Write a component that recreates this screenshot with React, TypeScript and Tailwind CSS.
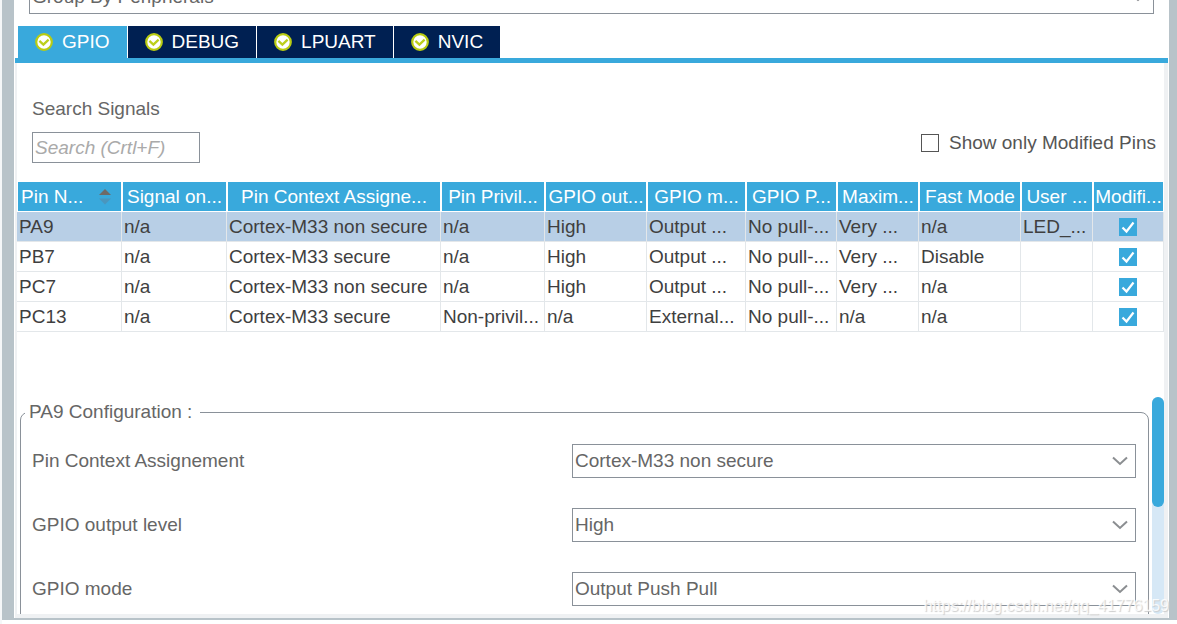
import { useState } from 'react';

interface Pin {
  name: string;
  values: string[];
}

const tabs = ['GPIO', 'DEBUG', 'LPUART', 'NVIC'];

const columns = [
  { label: 'Pin N...', width: 'w-[105px]' },
  { label: 'Signal on...', width: 'w-[105px]' },
  { label: 'Pin Context Assigne...', width: 'w-[214px]' },
  { label: 'Pin Privil...', width: 'w-[104px]' },
  { label: 'GPIO out...', width: 'w-[102px]' },
  { label: 'GPIO m...', width: 'w-[99px]' },
  { label: 'GPIO P...', width: 'w-[91px]' },
  { label: 'Maxim...', width: 'w-[82px]' },
  { label: 'Fast Mode', width: 'w-[102px]' },
  { label: 'User ...', width: 'w-[72px]' },
  { label: 'Modifi...', width: 'w-[71px]' },
];

const pins: Pin[] = [
  { name: 'PA9', values: ['n/a', 'Cortex-M33 non secure', 'n/a', 'High', 'Output ...', 'No pull-...', 'Very ...', 'n/a', 'LED_...'] },
  { name: 'PB7', values: ['n/a', 'Cortex-M33 secure', 'n/a', 'High', 'Output ...', 'No pull-...', 'Very ...', 'Disable', ''] },
  { name: 'PC7', values: ['n/a', 'Cortex-M33 non secure', 'n/a', 'High', 'Output ...', 'No pull-...', 'Very ...', 'n/a', ''] },
  { name: 'PC13', values: ['n/a', 'Cortex-M33 secure', 'Non-privil...', 'n/a', 'External...', 'No pull-...', 'n/a', 'n/a', ''] },
];

const settings = [
  { id: 'context', label: 'Pin Context Assignement', options: ['Cortex-M33 non secure', 'Cortex-M33 secure'] },
  { id: 'level', label: 'GPIO output level', options: ['High', 'Low'] },
  { id: 'mode', label: 'GPIO mode', options: ['Output Push Pull', 'Output Open Drain'] },
];

const StatusIcon = () => (
  <svg viewBox="0 0 18 18" className="w-[18px] h-[18px] shrink-0" aria-hidden="true">
    <circle cx="9" cy="9" r="7.8" fill="#fff" stroke="#b9cc12" strokeWidth="2.2" />
    <path d="M4.4 7.8 8.4 11.6 13.6 6.6" fill="none" stroke="#bccf1c" strokeWidth="2.3" />
  </svg>
);

const SortIcon = () => (
  <svg viewBox="0 0 12 16" className="w-3 h-4 shrink-0" aria-hidden="true">
    <path d="M6 0 12 6H0z" fill="#6e6a68" />
    <path d="M0 9.5H12L6 15.5z" fill="#4a96bd" />
  </svg>
);

const Chevron = () => (
  <svg
    viewBox="0 0 16 10"
    className="pointer-events-none absolute right-2 top-3 w-4 h-[10px]"
    aria-hidden="true"
  >
    <path d="M1 1.5 8 8 15 1.5" fill="none" stroke="#8b8e91" strokeWidth="2" />
  </svg>
);

const SelectBox = ({ id, label, options }: { id: string; label?: string; options: string[] }) => (
  <div className="relative w-full">
    <select
      id={id}
      aria-label={label}
      className="block w-full h-[34px] appearance-none rounded-none border border-[#8a9199] bg-white pl-[2px] pr-8 text-[#666]"
    >
      {options.map((option) => (
        <option key={option}>{option}</option>
      ))}
    </select>
    <Chevron />
  </div>
);

const PinCheckbox = ({ label }: { label: string }) => (
  <span className="relative mx-auto block w-[18px] h-[18px]">
    <input
      type="checkbox"
      defaultChecked
      aria-label={label}
      className="peer block w-[18px] h-[18px] appearance-none border border-[#39a9dc] checked:bg-[#39a9dc]"
    />
    <svg
      viewBox="0 0 18 18"
      className="pointer-events-none absolute inset-0 hidden peer-checked:block"
      aria-hidden="true"
    >
      <path d="M3.5 9.5 7.5 13.5 14.5 4.5" fill="none" stroke="#fff" strokeWidth="2.2" />
    </svg>
  </span>
);

export default function App() {
  const [activeTab, setActiveTab] = useState('GPIO');
  const [selected, setSelected] = useState('PA9');

  return (
    <div className="h-screen overflow-hidden bg-[#f5f7f8] pl-[2px] font-['Liberation_Sans',Arial,sans-serif] text-[19px] leading-6 text-[#666]">
      <div className="h-full border-b-4 border-white">
        <div className="h-full bg-[#b8c3c9] pl-3 pr-2 pb-[2px]">
          <div className="flex h-full flex-col overflow-hidden bg-white px-px">
            <div className="-mt-5 pl-[14px] pr-[14px]">
              <SelectBox id="group" label="Grouping" options={['Group By Peripherals']} />
            </div>

            <div role="tablist" className="mt-3 flex gap-px border-b-[5px] border-[#39a9dc] pl-[3px]">
              {tabs.map((tab) => (
                <button
                  key={tab}
                  role="tab"
                  aria-selected={tab === activeTab}
                  onClick={() => setActiveTab(tab)}
                  className={`flex h-8 items-center gap-[9px] px-[17px] text-white ${
                    tab === activeTab ? 'bg-[#39a9dc]' : 'bg-[#002052]'
                  }`}
                >
                  <StatusIcon />
                  {tab}
                </button>
              ))}
            </div>

            <div className="flex min-h-0 flex-1 flex-col border-l-2 border-r-4 border-b-4 border-[#eff1f3]">
              <div className="flex items-end justify-between pt-[34px] pl-[15px] pr-2">
                <div className="flex flex-col">
                  <label htmlFor="search">Search Signals</label>
                  <input
                    id="search"
                    type="text"
                    placeholder="Search (Crtl+F)"
                    className="mt-[11px] h-[31px] w-[168px] border border-[#8a9199] pl-[2px] placeholder:italic placeholder:text-[#aaa]"
                  />
                </div>
                <label className="mb-2 flex items-center gap-[10px] text-[#555]">
                  <input type="checkbox" className="w-[18px] h-[18px] appearance-none border border-[#555] checked:bg-[#39a9dc]" />
                  Show only Modified Pins
                </label>
              </div>

              <table className="mt-[19px] w-full table-fixed border-separate border-spacing-0 whitespace-nowrap">
                <thead>
                  <tr className="h-[30px] text-white">
                    {columns.map((col, i) => (
                      <th
                        key={col.label}
                        scope="col"
                        className={`${col.width} overflow-hidden border-l border-r border-b border-white bg-[#39a9dc] p-0 text-center font-normal`}
                      >
                        {i === 0 ? (
                          <span className="flex items-center justify-between pl-[3px] pr-[10px]">
                            {col.label}
                            <SortIcon />
                          </span>
                        ) : (
                          col.label
                        )}
                      </th>
                    ))}
                  </tr>
                </thead>
                <tbody className="text-[#3f3f3f]">
                  {pins.map((pin) => (
                    <tr
                      key={pin.name}
                      onClick={() => setSelected(pin.name)}
                      className={pin.name === selected ? 'h-[30px] bg-[#b8cfe6]' : 'h-[30px] bg-white'}
                    >
                      {[pin.name, ...pin.values].map((value, i) => (
                        <td key={i} className="overflow-hidden border-r border-b border-[#e3e7ea] p-0 pl-[2px]">
                          {value}
                        </td>
                      ))}
                      <td className="border-r border-b border-[#e3e7ea] p-0">
                        <PinCheckbox label={`${pin.name} modified`} />
                      </td>
                    </tr>
                  ))}
                </tbody>
              </table>

              <div className="mt-[65px] flex min-h-0 flex-1">
                <div className="min-w-0 flex-1 overflow-hidden pt-[3px] pl-[3px] pr-[3px]">
                  <fieldset className="rounded-lg border border-[#8a9199] pl-[11px] pr-3 pb-8">
                    <legend className="-ml-[7px] pl-1 pr-2">{selected} Configuration :</legend>
                    <div className="flex flex-col gap-[30px] pt-5">
                      {settings.map((setting) => (
                        <div key={setting.id} className="flex items-center">
                          <label htmlFor={setting.id} className="w-[540px] shrink-0">
                            {setting.label}
                          </label>
                          <SelectBox id={setting.id} options={setting.options} />
                        </div>
                      ))}
                    </div>
                  </fieldset>
                </div>
                <div className="w-3 rounded-full bg-[#d6e8f6]">
                  <div className="h-[110px] rounded-full bg-[#39a9dc]" />
                </div>
              </div>
            </div>
          </div>
        </div>
      </div>
      <p className="pointer-events-none absolute bottom-[6px] right-2 text-base text-white/80 [text-shadow:1px_1px_1px_#ccc]">
        https://blog.csdn.net/qq_41776159
      </p>
    </div>
  );
}
